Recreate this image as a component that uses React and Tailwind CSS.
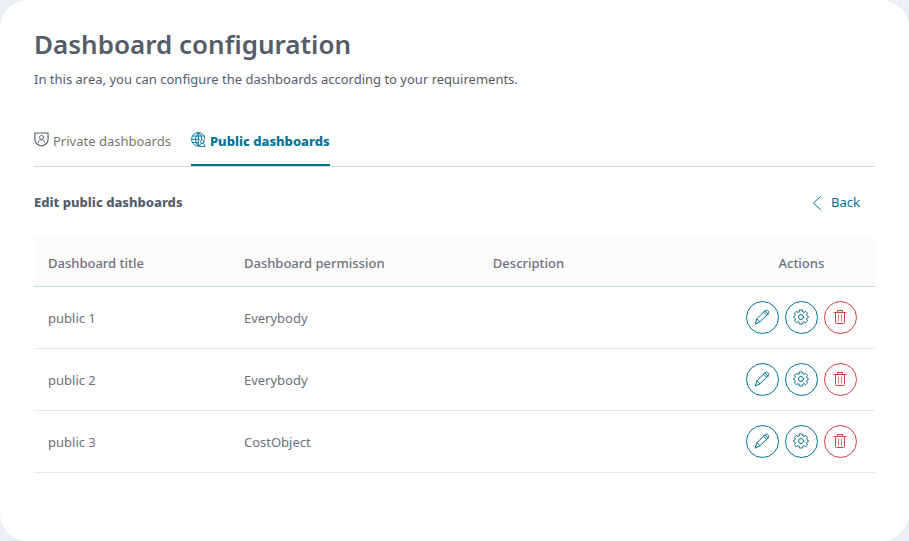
import { useState } from "react"

const initialDashboards = [
  { id: 1, title: "public 1", permission: "Everybody", description: "" },
  { id: 2, title: "public 2", permission: "Everybody", description: "" },
  { id: 3, title: "public 3", permission: "CostObject", description: "" },
]

function Icon({ className, children }) {
  return (
    <svg
      className={className}
      viewBox="0 0 16 16"
      fill="none"
      stroke="currentColor"
      strokeLinecap="round"
      strokeLinejoin="round"
      aria-hidden="true"
    >
      {children}
    </svg>
  )
}

const ShieldUserIcon = () => (
  <Icon className="mt-px size-[15px] shrink-0 text-[#555d6b]">
    <path strokeWidth="1.2" d="M1 1h14v7c0 3.700-3.100 6-7 7-3.900-1-7-3.300-7-7z" />
    <circle cx="8" cy="5.900" r="2.200" />
    <path d="M4.500 11.600c.3-2.200 1.600-3.400 3.500-3.400s3.200 1.200 3.500 3.400" />
  </Icon>
)

const GlobeUserIcon = () => (
  <Icon className="mt-px size-[15px] shrink-0">
    <path d="M8 15A7.200 7.200 0 1 1 15 7.500M8 15C3.700 11 3.700 4.500 8 .8M8 .8c2.200 1.600 3.200 3.800 3.300 6.200M7.800 1v14M1.900 4.300h12.200M.9 7.800h8M1.900 11.300h5.600" />
    <circle cx="12" cy="10" r="1.900" />
    <path d="M9 15c.3-1.800 1.300-2.800 3-2.800s2.700 1 3 2.800z" />
  </Icon>
)

const PencilIcon = () => (
  <Icon className="size-4">
    <path d="M1.300 14.700l1.600-4.900 7.800-7.800c1-1 2.500-1.100 3.400-.2s.8 2.400-.2 3.400L5.900 12.700zM9.500 3.200l3.300 3.200M2.900 9.800l3 2.900M11 1.900l3.200 3.100" />
  </Icon>
)

const GearIcon = () => (
  <Icon className="size-4">
    <circle cx="8" cy="8" r="2.500" />
    <path d="M6.500 1h3l.4 1.900 1.100.5 1.700-1 1.900 1.900-1 1.700c.4.700.5 1 1.600 1.300v1.500c-1.100.2-1.400.6-1.600 1.300l1 1.700-1.900 1.900-1.700-1-1.100.5L9.500 15h-3l-.4-1.800-1.100-.5-1.700 1-1.900-1.900 1-1.700C2.200 9.400 1.900 9 .8 8.800V7.300C1.900 7 2 6.700 2.400 6l-1-1.700 1.900-1.900 1.700 1 1.100-.5z" />
  </Icon>
)

const TrashIcon = () => (
  <Icon className="size-4">
    <path d="M2 3.500h12M5.500 3.300V1.500h5v1.800M3.500 3.700v9.800c0 .6.400 1 1 1h7c.6 0 1-.4 1-1V3.700" />
    <path d="M6.500 6v6M9.500 6v6" opacity=".75" />
  </Icon>
)

const ChevronLeftIcon = () => (
  <Icon className="size-4">
    <path d="M11.500 1.500L4.500 8l7 6.500" />
  </Icon>
)

function ActionButton({ label, danger, onClick, children }) {
  return (
    <button
      type="button"
      aria-label={label}
      title={label}
      onClick={onClick}
      className={`flex size-[33px] items-center justify-center rounded-full border bg-white ${
        danger ? "border-[#d64045] text-[#d64045]" : "border-[#007298] text-[#007298]"
      }`}
    >
      {children}
    </button>
  )
}

function Tab({ active, icon, onClick, children }) {
  return (
    <button
      type="button"
      role="tab"
      aria-selected={active}
      onClick={onClick}
      className={`flex h-[35px] items-start gap-1 border-b-2 ${
        active ? "border-[#007298] font-extrabold text-[#007298]" : "border-transparent text-[#777777]"
      }`}
    >
      {icon}
      <span className="leading-5">{children}</span>
    </button>
  )
}

function App() {
  const [tab, setTab] = useState("public")
  const [dashboards, setDashboards] = useState(initialDashboards)

  const handleDelete = (id) => {
    setDashboards(dashboards.filter((item) => item.id !== id))
  }

  return (
    <div className="bg-[#edf0f3] font-['Noto_Sans',sans-serif] text-[13px] text-[#555d6b]">
      <main className="min-h-screen rounded-[28px] bg-white px-[34px] pt-[26px] pb-10">
        <h1 className="text-[26px] leading-9 font-semibold">Dashboard configuration</h1>
        <p className="mt-[5px] leading-6">
          In this area, you can configure the dashboards according to your requirements.
        </p>

        <div role="tablist" className="mt-10 flex gap-5 border-b border-[#d5d8db]">
          <Tab active={tab === "private"} icon={<ShieldUserIcon />} onClick={() => setTab("private")}>
            Private dashboards
          </Tab>
          <Tab active={tab === "public"} icon={<GlobeUserIcon />} onClick={() => setTab("public")}>
            Public dashboards
          </Tab>
        </div>

        <div className="flex h-[70px] items-center justify-between pt-0.5 pr-[15px]">
          <h2 className="font-extrabold">Edit public dashboards</h2>
          <a href="#back" className="flex items-center gap-1.5 text-[#007298]">
            <ChevronLeftIcon />
            Back
          </a>
        </div>

        <table className="w-full table-fixed text-left text-[#6b727e]">
          <thead>
            <tr className="h-[49px] border-b border-[#c5dfe6] bg-[#fcfcfc]">
              <th className="w-[23.3%] px-3.5 pt-1 font-medium">Dashboard title</th>
              <th className="w-[29.6%] px-3.5 pt-1 font-medium">Dashboard permission</th>
              <th className="w-[29.6%] px-3.5 pt-1 font-medium">Description</th>
              <th className="w-[17.5%] pt-1 text-center font-medium">Actions</th>
            </tr>
          </thead>
          <tbody>
            {dashboards.map((item) => (
              <tr key={item.id} className="h-[62px] border-b border-[#e8e9eb]">
                <td className="px-3.5 pt-1">{item.title}</td>
                <td className="px-3.5 pt-1">{item.permission}</td>
                <td className="px-3.5 pt-1">{item.description}</td>
                <td>
                  <div className="flex justify-center gap-1.5">
                    <ActionButton label="Edit">
                      <PencilIcon />
                    </ActionButton>
                    <ActionButton label="Settings">
                      <GearIcon />
                    </ActionButton>
                    <ActionButton label="Delete" danger onClick={() => handleDelete(item.id)}>
                      <TrashIcon />
                    </ActionButton>
                  </div>
                </td>
              </tr>
            ))}
          </tbody>
        </table>
      </main>
    </div>
  )
}

export default App
